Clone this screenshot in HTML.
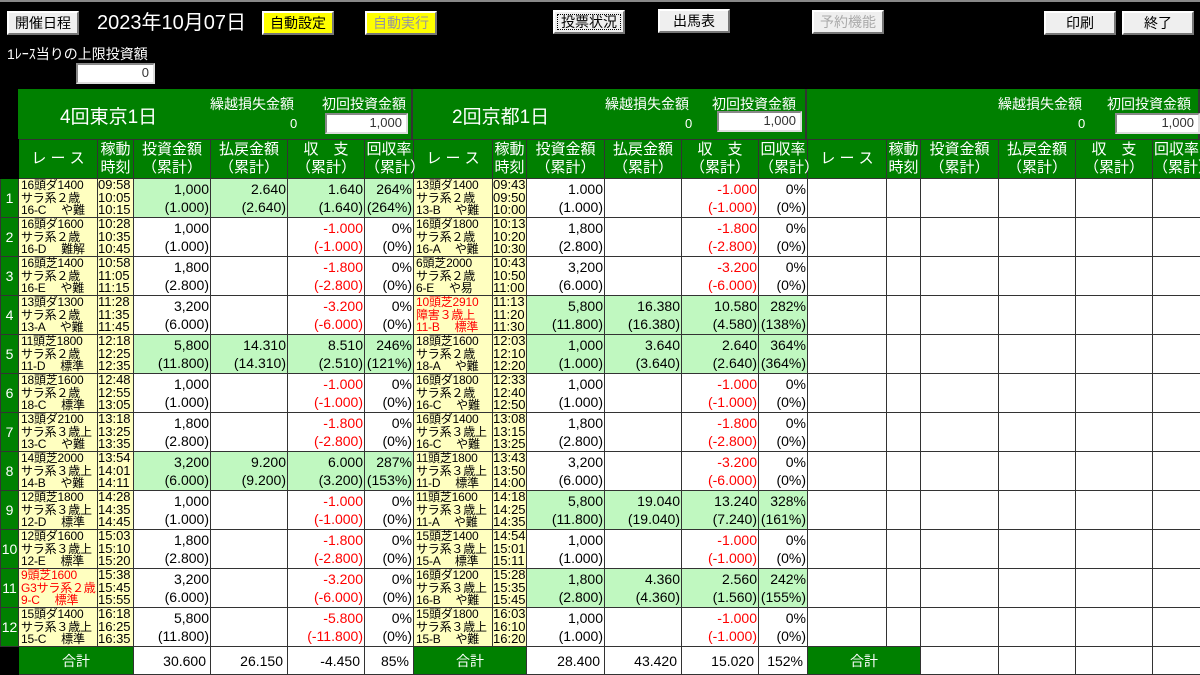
<!DOCTYPE html>
<html><head><meta charset="utf-8"><style>
*{margin:0;padding:0;box-sizing:border-box}
body{width:1200px;height:674px;background:#000;position:relative;overflow:hidden;font-family:"Liberation Sans","Noto Sans CJK JP",sans-serif;color:#000}
.btn{position:absolute;height:24px;background:#efefef;border:2px solid;border-color:#fff #777 #777 #fff;font-size:14px;text-align:center;line-height:20px}
.y{background:#ffff00}
.top{position:absolute;top:0;left:0;width:1200px;height:2px;background:#888}
.w{color:#fff;position:absolute}
.inp{position:absolute;background:#fff;border:2px solid;border-color:#888 #ddd #ddd #888;font-size:13px;text-align:right;padding-right:4px;line-height:16px;color:#333}
.title{position:absolute;top:89px;height:50px;background:#008000;border-right:2px solid #333}
table{position:absolute;left:0;top:139px;border-collapse:collapse;table-layout:fixed;width:1200px}
td{border:1px solid #333;background:#fff;font-size:14px;line-height:18px;overflow:hidden;white-space:nowrap;padding:0}
tr{height:39px}
th{background:#008000;color:#fff;font-weight:normal;font-size:15px;line-height:18px;border:1px solid #333;white-space:nowrap}
td.h{background:#008000;color:#fff;text-align:center;font-size:14px}
td.r{background:#ffffc0;font-size:12px;line-height:12.5px;padding-left:2px;text-align:left;letter-spacing:-0.2px}
td.t{background:#ffffc0;font-size:13px;line-height:12.5px;text-align:left}
td.n{text-align:right;padding-right:1px}
td.g{background:#c0f8c0}
.red{color:#f00}
tr.tot{height:28px}
tr.tot td{font-size:14px;text-align:right;padding-right:4px}
td.k{background:#000;border-color:#000}
</style></head><body>
<div class="top"></div>
<div class="btn" style="left:7px;top:11px;width:72px">開催日程</div>
<div class="w" style="left:97px;top:10px;font-size:20px;line-height:26px">2023年10月07日</div>
<div class="btn y" style="left:262px;top:11px;width:72px">自動設定</div>
<div class="btn y" style="left:365px;top:11px;width:72px;color:#999">自動実行</div>
<div class="btn" style="left:553px;top:10px;width:72px;outline:1px dotted #000;outline-offset:-5px">投票状況</div>
<div class="btn" style="left:658px;top:9px;width:72px">出馬表</div>
<div class="btn" style="left:812px;top:10px;width:72px;color:#aaa">予約機能</div>
<div class="btn" style="left:1044px;top:11px;width:72px">印刷</div>
<div class="btn" style="left:1122px;top:11px;width:72px">終了</div>
<div class="w" style="left:7px;top:44px;font-size:14px">1ﾚｰｽ当りの上限投資額</div>
<div class="inp" style="left:76px;top:63px;width:79px;height:21px">0</div>

<div class="title" style="left:18px;width:395px"></div>
<div class="title" style="left:413px;width:394px"></div>
<div class="title" style="left:807px;width:393px"></div>
<div class="w" style="left:60px;top:102px;font-size:19px">4回東京1日</div>
<div class="w" style="left:210px;top:94px;font-size:14px">繰越損失金額</div>
<div class="w" style="left:290px;top:116px;font-size:13px">0</div>
<div class="w" style="left:322px;top:94px;font-size:14px">初回投資金額</div>
<div class="inp" style="left:325px;top:113px;width:83px;height:21px">1,000</div>
<div class="w" style="left:452px;top:102px;font-size:19px">2回京都1日</div>
<div class="w" style="left:605px;top:94px;font-size:14px">繰越損失金額</div>
<div class="w" style="left:685px;top:116px;font-size:13px">0</div>
<div class="w" style="left:712px;top:94px;font-size:14px">初回投資金額</div>
<div class="inp" style="left:717px;top:111px;width:85px;height:21px">1,000</div>
<div class="w" style="left:998px;top:94px;font-size:14px">繰越損失金額</div>
<div class="w" style="left:1078px;top:116px;font-size:13px">0</div>
<div class="w" style="left:1107px;top:94px;font-size:14px">初回投資金額</div>
<div class="inp" style="left:1115px;top:113px;width:85px;height:21px">1,000</div>

<table>
<colgroup><col style="width:18px">
<col style="width:79px"><col style="width:36px"><col style="width:77px"><col style="width:77px"><col style="width:77px"><col style="width:49px">
<col style="width:79px"><col style="width:34px"><col style="width:78px"><col style="width:77px"><col style="width:77px"><col style="width:49px">
<col style="width:79px"><col style="width:34px"><col style="width:78px"><col style="width:77px"><col style="width:77px"><col style="width:48px"></colgroup>
<tr><td class="k"></td>
<th>レ ー ス</th><th>稼動<br>時刻</th><th>投資金額<br>（累計）</th><th>払戻金額<br>（累計）</th><th>収　支<br>（累計）</th><th>回収率<br>（累計）</th>
<th>レ ー ス</th><th>稼動<br>時刻</th><th>投資金額<br>（累計）</th><th>払戻金額<br>（累計）</th><th>収　支<br>（累計）</th><th>回収率<br>（累計）</th>
<th>レ ー ス</th><th>稼動<br>時刻</th><th>投資金額<br>（累計）</th><th>払戻金額<br>（累計）</th><th>収　支<br>（累計）</th><th>回収率<br>（累計）</th></tr>

<tr><td class="h">1</td><td class="r">16頭ダ1400<br>サラ系２歳<br>16-C　 や難</td><td class="t">09:58<br>10:05<br>10:15</td><td class="n g">1,000<br>(1.000)</td><td class="n g">2.640<br>(2.640)</td><td class="n g">1.640<br>(1.640)</td><td class="n g">264%<br>(264%)</td>
<td class="r">13頭ダ1400<br>サラ系２歳<br>13-B　 や難</td><td class="t">09:43<br>09:50<br>10:00</td><td class="n">1.000<br>(1.000)</td><td></td><td class="n red">-1.000<br>(-1.000)</td><td class="n">0%<br>(0%)</td>
<td></td><td></td><td></td><td></td><td></td><td></td></tr>

<tr><td class="h">2</td><td class="r">16頭ダ1600<br>サラ系２歳<br>16-D　 難解</td><td class="t">10:28<br>10:35<br>10:45</td><td class="n">1,000<br>(1.000)</td><td></td><td class="n red">-1.000<br>(-1.000)</td><td class="n">0%<br>(0%)</td>
<td class="r">16頭ダ1800<br>サラ系２歳<br>16-A　 や難</td><td class="t">10:13<br>10:20<br>10:30</td><td class="n">1,800<br>(2.800)</td><td></td><td class="n red">-1.800<br>(-2.800)</td><td class="n">0%<br>(0%)</td>
<td></td><td></td><td></td><td></td><td></td><td></td></tr>

<tr><td class="h">3</td><td class="r">16頭芝1400<br>サラ系２歳<br>16-E　 や難</td><td class="t">10:58<br>11:05<br>11:15</td><td class="n">1,800<br>(2.800)</td><td></td><td class="n red">-1.800<br>(-2.800)</td><td class="n">0%<br>(0%)</td>
<td class="r">6頭芝2000<br>サラ系２歳<br>6-E　 や易</td><td class="t">10:43<br>10:50<br>11:00</td><td class="n">3,200<br>(6.000)</td><td></td><td class="n red">-3.200<br>(-6.000)</td><td class="n">0%<br>(0%)</td>
<td></td><td></td><td></td><td></td><td></td><td></td></tr>

<tr><td class="h">4</td><td class="r">13頭ダ1300<br>サラ系２歳<br>13-A　 や難</td><td class="t">11:28<br>11:35<br>11:45</td><td class="n">3,200<br>(6.000)</td><td></td><td class="n red">-3.200<br>(-6.000)</td><td class="n">0%<br>(0%)</td>
<td class="r red">10頭芝2910<br>障害３歳上<br>11-B　 標準</td><td class="t">11:13<br>11:20<br>11:30</td><td class="n g">5,800<br>(11.800)</td><td class="n g">16.380<br>(16.380)</td><td class="n g">10.580<br>(4.580)</td><td class="n g">282%<br>(138%)</td>
<td></td><td></td><td></td><td></td><td></td><td></td></tr>

<tr><td class="h">5</td><td class="r">11頭芝1800<br>サラ系２歳<br>11-D　 標準</td><td class="t">12:18<br>12:25<br>12:35</td><td class="n g">5,800<br>(11.800)</td><td class="n g">14.310<br>(14.310)</td><td class="n g">8.510<br>(2.510)</td><td class="n g">246%<br>(121%)</td>
<td class="r">18頭芝1600<br>サラ系２歳<br>18-A　 や難</td><td class="t">12:03<br>12:10<br>12:20</td><td class="n g">1,000<br>(1.000)</td><td class="n g">3.640<br>(3.640)</td><td class="n g">2.640<br>(2.640)</td><td class="n g">364%<br>(364%)</td>
<td></td><td></td><td></td><td></td><td></td><td></td></tr>

<tr><td class="h">6</td><td class="r">18頭芝1600<br>サラ系２歳<br>18-C　 標準</td><td class="t">12:48<br>12:55<br>13:05</td><td class="n">1,000<br>(1.000)</td><td></td><td class="n red">-1.000<br>(-1.000)</td><td class="n">0%<br>(0%)</td>
<td class="r">16頭ダ1800<br>サラ系２歳<br>16-C　 や難</td><td class="t">12:33<br>12:40<br>12:50</td><td class="n">1,000<br>(1.000)</td><td></td><td class="n red">-1.000<br>(-1.000)</td><td class="n">0%<br>(0%)</td>
<td></td><td></td><td></td><td></td><td></td><td></td></tr>

<tr><td class="h">7</td><td class="r">13頭ダ2100<br>サラ系３歳上<br>13-C　 や難</td><td class="t">13:18<br>13:25<br>13:35</td><td class="n">1,800<br>(2.800)</td><td></td><td class="n red">-1.800<br>(-2.800)</td><td class="n">0%<br>(0%)</td>
<td class="r">16頭ダ1400<br>サラ系３歳上<br>16-C　 や難</td><td class="t">13:08<br>13:15<br>13:25</td><td class="n">1,800<br>(2.800)</td><td></td><td class="n red">-1.800<br>(-2.800)</td><td class="n">0%<br>(0%)</td>
<td></td><td></td><td></td><td></td><td></td><td></td></tr>

<tr><td class="h">8</td><td class="r">14頭芝2000<br>サラ系３歳上<br>14-B　 や難</td><td class="t">13:54<br>14:01<br>14:11</td><td class="n g">3,200<br>(6.000)</td><td class="n g">9.200<br>(9.200)</td><td class="n g">6.000<br>(3.200)</td><td class="n g">287%<br>(153%)</td>
<td class="r">11頭芝1800<br>サラ系３歳上<br>11-D　 標準</td><td class="t">13:43<br>13:50<br>14:00</td><td class="n">3,200<br>(6.000)</td><td></td><td class="n red">-3.200<br>(-6.000)</td><td class="n">0%<br>(0%)</td>
<td></td><td></td><td></td><td></td><td></td><td></td></tr>

<tr><td class="h">9</td><td class="r">12頭芝1800<br>サラ系３歳上<br>12-D　 標準</td><td class="t">14:28<br>14:35<br>14:45</td><td class="n">1,000<br>(1.000)</td><td></td><td class="n red">-1.000<br>(-1.000)</td><td class="n">0%<br>(0%)</td>
<td class="r">11頭芝1600<br>サラ系３歳上<br>11-A　 や難</td><td class="t">14:18<br>14:25<br>14:35</td><td class="n g">5,800<br>(11.800)</td><td class="n g">19.040<br>(19.040)</td><td class="n g">13.240<br>(7.240)</td><td class="n g">328%<br>(161%)</td>
<td></td><td></td><td></td><td></td><td></td><td></td></tr>

<tr><td class="h">10</td><td class="r">12頭ダ1600<br>サラ系３歳上<br>12-E　 標準</td><td class="t">15:03<br>15:10<br>15:20</td><td class="n">1,800<br>(2.800)</td><td></td><td class="n red">-1.800<br>(-2.800)</td><td class="n">0%<br>(0%)</td>
<td class="r">15頭芝1400<br>サラ系３歳上<br>15-A　 標準</td><td class="t">14:54<br>15:01<br>15:11</td><td class="n">1,000<br>(1.000)</td><td></td><td class="n red">-1.000<br>(-1.000)</td><td class="n">0%<br>(0%)</td>
<td></td><td></td><td></td><td></td><td></td><td></td></tr>

<tr><td class="h">11</td><td class="r red">9頭芝1600<br>G3サラ系２歳<br>9-C　 標準</td><td class="t">15:38<br>15:45<br>15:55</td><td class="n">3,200<br>(6.000)</td><td></td><td class="n red">-3.200<br>(-6.000)</td><td class="n">0%<br>(0%)</td>
<td class="r">16頭ダ1200<br>サラ系３歳上<br>16-B　 や難</td><td class="t">15:28<br>15:35<br>15:45</td><td class="n g">1,800<br>(2.800)</td><td class="n g">4.360<br>(4.360)</td><td class="n g">2.560<br>(1.560)</td><td class="n g">242%<br>(155%)</td>
<td></td><td></td><td></td><td></td><td></td><td></td></tr>

<tr><td class="h">12</td><td class="r">15頭ダ1400<br>サラ系３歳上<br>15-C　 標準</td><td class="t">16:18<br>16:25<br>16:35</td><td class="n">5,800<br>(11.800)</td><td></td><td class="n red">-5.800<br>(-11.800)</td><td class="n">0%<br>(0%)</td>
<td class="r">15頭ダ1800<br>サラ系３歳上<br>15-B　 や難</td><td class="t">16:03<br>16:10<br>16:20</td><td class="n">1,000<br>(1.000)</td><td></td><td class="n red">-1.000<br>(-1.000)</td><td class="n">0%<br>(0%)</td>
<td></td><td></td><td></td><td></td><td></td><td></td></tr>

<tr class="tot"><td class="k"></td><td class="h" colspan="2" style="text-align:center;padding:0">合計</td><td>30.600</td><td>26.150</td><td>-4.450</td><td>85%</td>
<td class="h" colspan="2" style="text-align:center;padding:0">合計</td><td>28.400</td><td>43.420</td><td>15.020</td><td>152%</td>
<td class="h" colspan="2" style="text-align:center;padding:0">合計</td><td></td><td></td><td></td><td></td></tr>
</table>
</body></html>
